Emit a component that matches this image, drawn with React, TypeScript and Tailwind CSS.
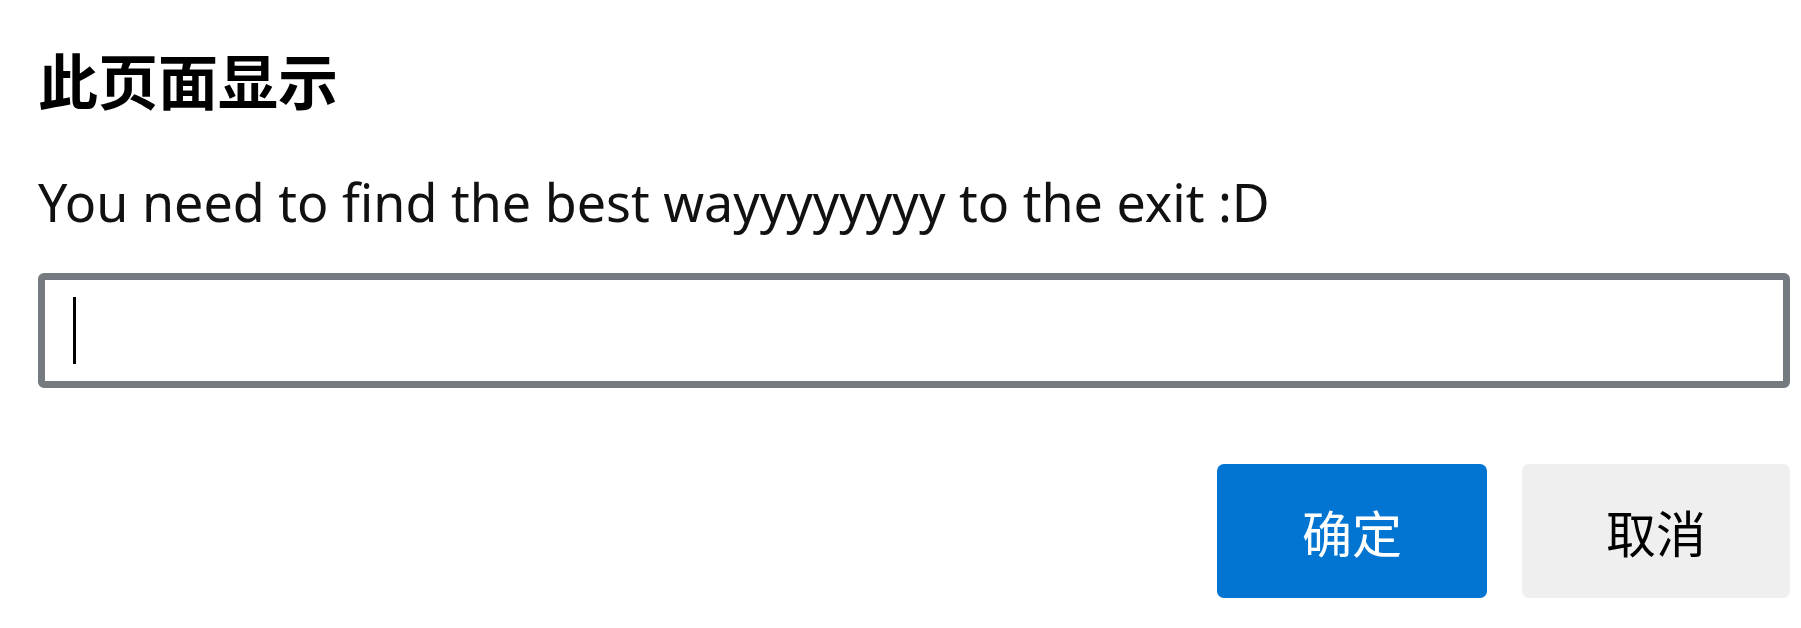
import React from "react";

const cjk = '"Noto Sans CJK SC", "Noto Sans", sans-serif';
const latin = '"Noto Sans", "Noto Sans CJK SC", sans-serif';

const PromptDialog: React.FC = () => {
  return (
    <div className="w-[1801px] h-[628px] bg-white overflow-hidden">
      <div className="flex flex-col pl-[38px] pr-[11px] pt-[49px]">
        <h1
          className="text-[60px] font-bold leading-none text-black"
          style={{ fontFamily: cjk }}
        >
          此页面显示
        </h1>
        <p
          className="mt-[67px] text-[52px] leading-none text-[#111] whitespace-nowrap"
          style={{ fontFamily: latin }}
        >
          You need to find the best wayyyyyyyy to the exit :D
        </p>
        <div className="mt-[45px] h-[115px] w-full rounded-[6px] border-[7px] border-[#757a80] bg-white flex items-center pl-[28px]">
          <span className="block w-[3px] h-[67px] bg-black" />
        </div>
        <div className="mt-[76px] flex justify-end gap-[35px]">
          <button
            className="w-[270px] h-[134px] rounded-[7px] bg-[#0275d3] text-white text-[50px] leading-none"
            style={{ fontFamily: cjk }}
          >
            确定
          </button>
          <button
            className="w-[268px] h-[134px] rounded-[7px] bg-[#efefef] text-black text-[50px] leading-none"
            style={{ fontFamily: cjk }}
          >
            取消
          </button>
        </div>
      </div>
    </div>
  );
};

export default function App() {
  return <PromptDialog />;
}
